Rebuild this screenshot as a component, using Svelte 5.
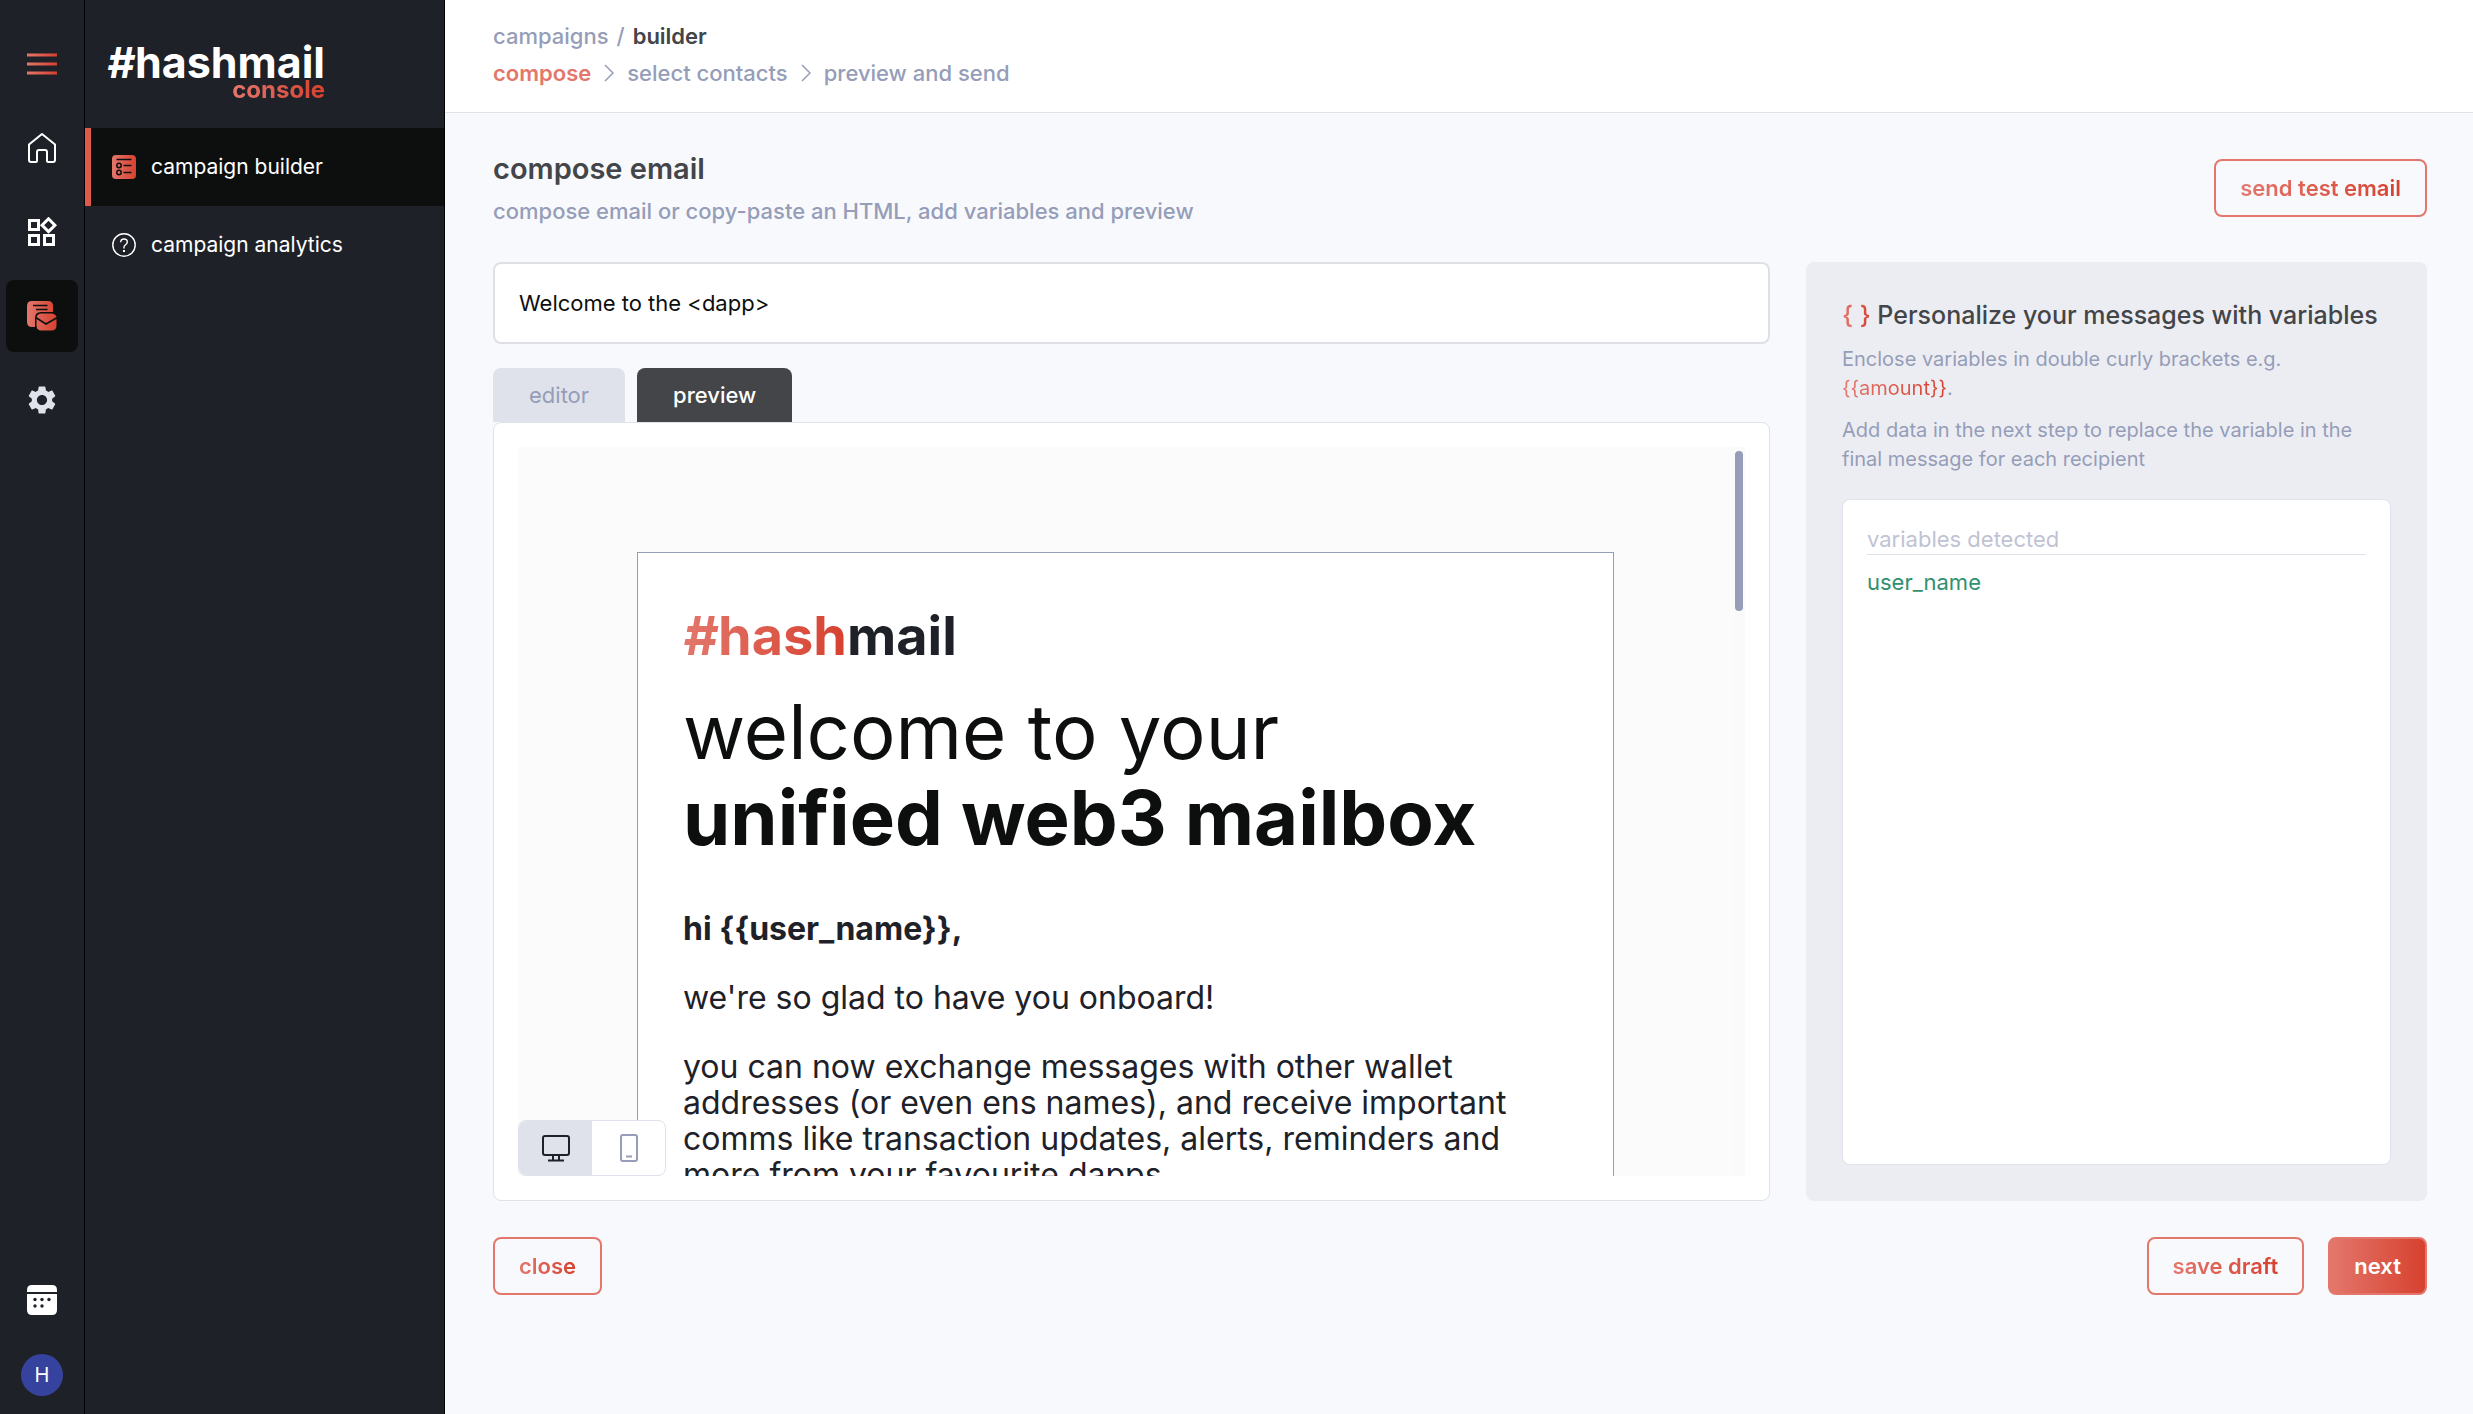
<script>
	let subject = "Welcome to the <dapp>";
	let activeTab = "preview";
	let device = "desktop";

	const tabs = ["editor", "preview"];
	const steps = ["compose", "select contacts", "preview and send"];
	const variables = ["user_name"];
</script>

<svg class="defs" width="0" height="0" aria-hidden="true">
	<defs>
		<linearGradient id="brand" x1="0" y1="0" x2="1" y2="0">
			<stop offset="0" stop-color="#e3776c" />
			<stop offset="1" stop-color="#d7412f" />
		</linearGradient>
		<linearGradient id="brand-page" gradientUnits="userSpaceOnUse" x1="0" y1="0" x2="30" y2="0">
			<stop offset="0" stop-color="#e3776c" />
			<stop offset="1" stop-color="#d7412f" />
		</linearGradient>
	</defs>
</svg>

<div class="app">
	<nav class="rail" aria-label="main">
		<button class="rail-item" aria-label="menu">
			<svg width="30" height="30" viewBox="0 0 30 30" stroke="url(#brand-page)" stroke-width="3" fill="none">
				<path d="M0 6h30M0 15h30M0 24h30" />
			</svg>
		</button>
		<a class="rail-item" href="#home" aria-label="home">
			<svg width="30" height="32" viewBox="0 0 30 32" stroke="#fff" stroke-width="2" fill="none" stroke-linejoin="round">
				<path d="M2 12.5 15 2l13 10.500V28q0 2-2 2h-5q-1 0-1-1V20q0-2-2-2h-6q-2 0-2 2v9q0 1-1 1H4q-2 0-2-2z" />
			</svg>
		</a>
		<a class="rail-item" href="#apps" aria-label="apps">
			<svg width="30" height="30" viewBox="0 0 30 30" stroke="#fff" stroke-width="3" fill="none">
				<path d="M2.500 3.500h9v9h-9zM2.500 18.500h9v9h-9zM17.500 18.500h9v9h-9zM21.500 1.800l6.400 6.400-6.400 6.400-6.400-6.400z" />
			</svg>
		</a>
		<a class="rail-item active" href="#campaigns" aria-label="campaigns">
			<svg width="30" height="30" viewBox="0 0 30 30">
				<path fill="url(#brand-page)" d="M5 0h16q5 0 5 5v6H14q-6 0-6 6v9H5q-5 0-5-5V5q0-5 5-5z" />
				<path fill="url(#brand-page)" d="M9.500 18l9.500 6 10.500-6v6.500q0 5-5 5h-10q-5 0-5-5z" />
				<path fill="url(#brand-page)" d="M9.500 16q1-3.500 5-3.500h10q4 0 5 3.500L19 22z" />
				<path stroke="#0d0f0e" stroke-width="1.500" d="M6 4.500h14.500M9 8.500h11.500" />
			</svg>
		</a>
		<a class="rail-item" href="#settings" aria-label="settings">
			<svg width="34" height="34" viewBox="0 0 24 24" fill="#dfe2eb">
				<path d="M19.140 12.940c.04-.3.060-.61.060-.94 0-.32-.02-.64-.07-.94l2.030-1.580a.49.49 0 0 0 .12-.61l-1.920-3.320a.488.488 0 0 0-.59-.22l-2.390.96c-.5-.38-1.030-.7-1.620-.94l-.36-2.540a.484.484 0 0 0-.48-.41h-3.840c-.24 0-.43.17-.47.41l-.36 2.540c-.59.24-1.130.57-1.620.94l-2.390-.96c-.22-.08-.47 0-.59.22L2.740 8.870c-.12.21-.08.47.12.61l2.030 1.580c-.05.3-.09.63-.09.94s.02.64.07.94l-2.030 1.580a.49.49 0 0 0-.12.61l1.920 3.320c.12.22.37.29.59.22l2.390-.96c.5.38 1.030.7 1.620.94l.36 2.540c.05.24.24.41.48.41h3.840c.24 0 .44-.17.47-.41l.36-2.540c.59-.24 1.130-.56 1.620-.94l2.390.96c.22.08.47 0 .59-.22l1.920-3.320c.12-.22.07-.47-.12-.61zM12 15.600c-1.980 0-3.600-1.620-3.600-3.600s1.620-3.600 3.600-3.600 3.600 1.620 3.600 3.600-1.620 3.600-3.600 3.600z" />
			</svg>
		</a>
		<span class="spacer"></span>
		<a class="rail-item" href="#calendar" aria-label="calendar">
			<svg width="30" height="30" viewBox="0 0 30 30">
				<path fill="#fff" d="M5 0h20q5 0 5 5v2H0V5q0-5 5-5zM0 9h30v16q0 5-5 5H5q-5 0-5-5z" />
				<g fill="#1f2128">
					<circle cx="8" cy="14.500" r="1.700" /><circle cx="15" cy="14.500" r="1.700" /><circle cx="22" cy="14.500" r="1.700" />
					<circle cx="8" cy="21" r="1.700" /><circle cx="15" cy="21" r="1.700" />
				</g>
			</svg>
		</a>
		<button class="avatar" aria-label="account">H</button>
	</nav>

	<aside class="sidebar">
		<div class="logo">
			<span class="logo-name"><i>#</i>hashmail</span>
			<span class="logo-sub">console</span>
		</div>
		<a class="side-link active" href="#builder">
			<svg width="24" height="24" viewBox="0 0 24 24">
				<rect width="24" height="24" rx="4" fill="url(#brand)" />
				<g stroke="#0d0f0e" stroke-width="1.500" fill="none">
					<path d="M4.500 4.500h15M11.500 10.500h8M11.500 17.500h8" />
					<circle cx="7" cy="10.500" r="2.200" />
					<circle cx="7" cy="17.500" r="2.200" />
				</g>
			</svg>
			campaign builder
		</a>
		<a class="side-link" href="#analytics">
			<svg width="24" height="24" viewBox="0 0 24 24" stroke="#fff" stroke-width="1.400" fill="none">
				<circle cx="12" cy="12" r="11.200" />
				<path d="M8.700 9.200q0-3.200 3.300-3.200t3.300 3q0 1.500-1.700 2.700T12 14.200v1.300" />
				<path d="M12 17v2" stroke-width="2" />
			</svg>
			campaign analytics
		</a>
	</aside>

	<main>
		<header>
			<div class="crumbs">
				<a href="#campaigns">campaigns</a>
				<span>/</span>
				<strong>builder</strong>
			</div>
			<div class="steps">
				{#each steps as step, i}
					{#if i > 0}
						<svg width="10" height="18" viewBox="0 0 10 18" stroke="#959db8" stroke-width="1.500" fill="none">
							<path d="M1 1l8 8-8 8" />
						</svg>
					{/if}
					<a href="#step-{i}" class:current={i === 0}>{step}</a>
				{/each}
			</div>
		</header>

		<section class="page">
			<div class="title-row">
				<div>
					<h1>compose email</h1>
					<p class="subtitle">compose email or copy-paste an HTML, add variables and preview</p>
				</div>
				<button class="btn"><span>send test email</span></button>
			</div>

			<div class="columns">
				<div class="compose">
					<input class="subject" type="text" aria-label="subject" bind:value={subject} />
					<div class="tabs">
						{#each tabs as tab}
							<button class="tab" class:active={tab === activeTab} on:click={() => (activeTab = tab)}>{tab}</button>
						{/each}
					</div>
					<div class="panel">
						<div class="preview">
							<div class="mail-scroll">
								<article class="mail">
									<div class="mail-logo"><span><i>#</i>hash</span>mail</div>
									<h2>welcome to your<br /><b>unified web3 mailbox</b></h2>
									<p><b>{"hi {{user_name}},"}</b></p>
									<p>we're so glad to have you onboard!</p>
									<p>
										you can now exchange messages with other wallet addresses (or even ens names), and receive
										important comms like transaction updates, alerts, reminders and more from your favourite dapps.
									</p>
								</article>
							</div>
							<div class="track"><div class="thumb"></div></div>
							<div class="devices">
								<button class:on={device === "desktop"} aria-label="desktop" on:click={() => (device = "desktop")}>
									<svg width="28" height="28" viewBox="0 0 28 28" stroke="currentColor" stroke-width="2" fill="none">
										<rect x="1" y="2" width="26" height="19" rx="2" />
										<path d="M11 21v5M17 21v5M6 26.500h16" />
									</svg>
								</button>
								<button class:on={device === "mobile"} aria-label="mobile" on:click={() => (device = "mobile")}>
									<svg width="18" height="28" viewBox="0 0 18 28" stroke="currentColor" stroke-width="2" fill="none">
										<rect x="1" y="1" width="16" height="26" rx="2" />
										<path d="M6 22.500h6" />
									</svg>
								</button>
							</div>
						</div>
					</div>
				</div>

				<aside class="variables">
					<h3><span class="brand-text">{"{ }"}</span> Personalize your messages with variables</h3>
					<p>Enclose variables in double curly brackets e.g. <span class="brand-text">{"{{amount}}"}</span>.</p>
					<p>Add data in the next step to replace the variable in the final message for each recipient</p>
					<div class="detected">
						<h4>variables detected</h4>
						<ul>
							{#each variables as name}
								<li>{name}</li>
							{/each}
						</ul>
					</div>
				</aside>
			</div>

			<footer>
				<button class="btn"><span>close</span></button>
				<span class="spacer"></span>
				<button class="btn"><span>save draft</span></button>
				<button class="btn primary">next</button>
			</footer>
		</section>
	</main>
</div>

<style>
	:global(body) {
		background: #f8f9fd;
	}
	.app {
		display: flex;
		min-height: 100vh;
		font-family: Inter, "Open Sans", sans-serif;
		font-size: 22px;
		line-height: 30px;
		color: #434549;
	}
	h1,
	h2,
	h3,
	h4,
	p,
	ul {
		margin: 0;
		padding: 0;
	}
	button,
	input {
		font: inherit;
	}
	button {
		cursor: pointer;
	}
	a {
		color: inherit;
		text-decoration: none;
	}
	.defs {
		position: absolute;
	}
	.spacer {
		flex: 1;
	}
	.brand-text,
	.logo-sub,
	.mail-logo span,
	.btn span {
		background: linear-gradient(90deg, #e3776c, #d7412f);
		background-clip: text;
		color: transparent;
	}

	/* icon rail */
	.rail {
		display: flex;
		flex-direction: column;
		align-items: center;
		gap: 12px;
		width: 84px;
		padding: 28px 0 18px;
		box-sizing: border-box;
		flex: none;
		background: #1f2128;
		box-shadow: 1px 0 #000;
	}
	.rail-item {
		display: flex;
		align-items: center;
		justify-content: center;
		width: 72px;
		height: 72px;
		padding: 0;
		border: none;
		border-radius: 8px;
		background: none;
	}
	.rail-item.active {
		background: #0d0f0e;
	}
	.avatar {
		width: 42px;
		height: 42px;
		margin-top: 6px;
		padding: 0;
		border: none;
		border-radius: 50%;
		background: #36439e;
		color: #fff;
		font-size: 20px;
	}

	/* sidebar */
	.sidebar {
		width: 359px;
		margin-left: 1px;
		border-right: 1px solid #000;
		flex: none;
		background: #1f2128;
		color: #fff;
		font-size: 21px;
	}
	.logo {
		display: flex;
		flex-direction: column;
		align-items: flex-end;
		width: 240px;
		height: 128px;
		padding-top: 44px;
		box-sizing: border-box;
		font-weight: 700;
	}
	.logo-name {
		font-size: 43px;
		line-height: 36px;
	}
	.logo-sub {
		font-size: 24px;
		line-height: 20px;
	}
	.side-link {
		display: flex;
		align-items: center;
		gap: 15px;
		height: 78px;
		padding-left: 27px;
	}
	.side-link.active {
		padding-left: 21px;
		border-left: 6px solid #e05a4b;
		background: #0d0f0e;
	}

	main {
		flex: 1;
		min-width: 0;
	}
	header {
		padding: 21px 48px 24px;
		border-bottom: 1px solid #dfe2eb;
		background: #fff;
		color: #959db8;
		font-weight: 500;
	}
	.crumbs,
	.steps {
		display: flex;
		align-items: center;
		gap: 8px;
	}
	.crumbs strong {
		color: #434549;
		font-weight: 600;
	}
	.steps {
		gap: 13px;
		margin-top: 7px;
	}
	.steps .current {
		color: #e3776c;
		font-weight: 600;
	}

	.page {
		padding: 36px 46px 48px 48px;
	}
	.title-row {
		display: flex;
		align-items: center;
		justify-content: space-between;
		margin-bottom: 36px;
	}
	h1 {
		font-size: 29px;
		line-height: 40px;
		font-weight: 600;
	}
	.subtitle {
		margin-top: 7px;
		color: #959db8;
		font-weight: 500;
	}
	.btn {
		height: 58px;
		padding: 0 24px;
		border: 2px solid #e3776c;
		border-radius: 8px;
		background: none;
		font-weight: 600;
	}
	.btn.primary {
		background: linear-gradient(90deg, #e3776c, #d7412f);
		color: #fff;
	}

	.columns {
		display: grid;
		grid-template-columns: 1277fr 621fr;
		grid-template-rows: 939px;
		gap: 36px;
	}
	.compose {
		display: flex;
		flex-direction: column;
		min-width: 0;
	}
	.subject {
		height: 82px;
		padding: 0 24px;
		box-sizing: border-box;
		border: 2px solid #dfe0e6;
		border-radius: 8px;
		background: #fff;
		color: #0d0f0e;
	}
	.tabs {
		display: flex;
		gap: 12px;
		margin-top: 24px;
	}
	.tab {
		height: 54px;
		padding: 0 36px;
		border: none;
		border-radius: 8px 8px 0 0;
		background: #dfe2eb;
		color: #959db8;
	}
	.tab.active {
		background: #434549;
		color: #fff;
		font-weight: 500;
	}
	.panel {
		display: flex;
		flex: 1;
		min-height: 0;
		padding: 24px;
		border: 1px solid #dfe2eb;
		border-radius: 8px;
		background: #fff;
	}
	.preview {
		display: flex;
		position: relative;
		flex: 1;
		min-width: 0;
		overflow: hidden;
		background: #fbfbfb;
	}
	.mail-scroll {
		flex: 1;
		min-width: 0;
		padding: 105px 119px 0;
	}
	.mail {
		padding: 56px 45px;
		border: 1px solid #959db8;
		background: #fff;
		color: #1f2128;
		font-size: 32px;
		line-height: 36px;
	}
	.mail-logo {
		font-size: 54px;
		line-height: 54px;
		font-weight: 700;
	}
	.mail h2 {
		margin: 25px 0 51px;
		color: #0d0f0e;
		font-size: 76px;
		line-height: 86px;
		font-weight: 400;
	}
	.mail p + p {
		margin-top: 33px;
	}
	.track {
		width: 12px;
		padding-top: 4px;
		background: #fafafa;
	}
	.thumb {
		width: 8px;
		height: 160px;
		margin: 0 auto;
		border-radius: 4px;
		background: #959db8;
	}
	.devices {
		display: flex;
		position: absolute;
		left: 0;
		bottom: 0;
		border: 1px solid #dfe2eb;
		border-radius: 8px;
		background: #fff;
		overflow: hidden;
	}
	.devices button {
		display: flex;
		align-items: center;
		justify-content: center;
		width: 73px;
		height: 54px;
		padding: 0;
		border: none;
		background: none;
		color: #959db8;
	}
	.devices .on {
		background: #dfe2eb;
		color: #1f2128;
	}

	.variables {
		display: flex;
		flex-direction: column;
		min-width: 0;
		padding: 36px;
		box-sizing: border-box;
		border-radius: 8px;
		background: #ecedf3;
	}
	h3 {
		font-size: 25px;
		line-height: 34px;
		font-weight: 500;
	}
	.variables p {
		margin-top: 13px;
		color: #959db8;
		font-size: 20px;
		line-height: 29px;
	}
	.detected {
		flex: 1;
		margin-top: 25px;
		padding: 24px;
		border: 1px solid #dfe2eb;
		border-radius: 8px;
		background: #fff;
	}
	h4 {
		border-bottom: 1px solid #dfe2eb;
		color: #bfc3d3;
		font-size: 22px;
		font-weight: 400;
	}
	ul {
		list-style: none;
	}
	li {
		margin-top: 12px;
		color: #31906f;
	}

	footer {
		display: flex;
		gap: 24px;
		margin-top: 36px;
	}
</style>
